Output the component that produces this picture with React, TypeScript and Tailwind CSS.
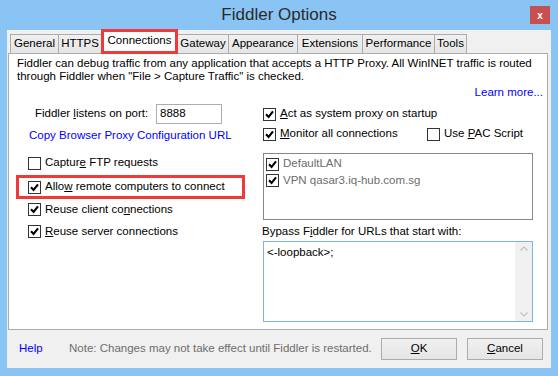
import { ReactNode } from 'react'

const tabs = [
  { name: 'General', w: 'w-[49px]' },
  { name: 'HTTPS', w: 'w-[44px]' },
  { name: 'Connections', w: 'w-[77px]', active: true },
  { name: 'Gateway', w: 'w-[52px]' },
  { name: 'Appearance', w: 'w-[70px]' },
  { name: 'Extensions', w: 'w-[66px]' },
  { name: 'Performance', w: 'w-[73px]' },
  { name: 'Tools', w: 'w-[33px]' },
]

function Check({ checked }: { checked?: boolean }) {
  return (
    <span className="w-[13px] h-[13px] border border-[#333] bg-white flex items-center justify-center shrink-0">
      {checked && (
        <svg width="9" height="9" viewBox="0 0 9 9">
          <path d="M1 4.2 L3.6 7 L8 1.4" stroke="#000" strokeWidth="2.1" fill="none" />
        </svg>
      )}
    </span>
  )
}

function CheckRow({ checked, children, className }: { checked?: boolean; children: ReactNode; className?: string }) {
  return (
    <div className={`flex items-center gap-[4px] ${className ?? ''}`}>
      <Check checked={checked} />
      <span className="whitespace-nowrap">{children}</span>
    </div>
  )
}

export default function App() {
  return (
    <div className="w-[558px] h-[376px] bg-[#8ac4f4] flex flex-col font-['Liberation_Sans',Arial,sans-serif] text-[11.5px] text-black overflow-hidden">
      {/* title bar */}
      <div className="h-[30px] relative flex items-center justify-center">
        <span className="text-[17px] text-[#2a2a2a]">Fiddler Options</span>
        <div className="absolute right-[8px] top-[6px] w-[20px] h-[18px] bg-[#c75050] flex items-center justify-center text-white text-[10px] font-bold">
          x
        </div>
      </div>

      {/* client */}
      <div className="mx-[7px] mb-[8px] flex-1 bg-[#f0f0f0] flex flex-col">
        {/* tabs */}
        <div className="h-[23px] flex items-end pl-[3px]">
          {tabs.map((t, i) =>
            t.active ? (
              <div
                key={t.name}
                className={`${t.w} h-[25px] -ml-px border-[3px] border-[#f03a3a] bg-white flex items-center justify-center relative z-10 -mb-[1px]`}
              >
                <span className="whitespace-nowrap -mt-[2px]">{t.name}</span>
              </div>
            ) : (
              <div
                key={t.name}
                className={`${t.w} h-[19px] ${i > 0 ? '-ml-px' : ''} border border-b-0 border-[#acacac] bg-[linear-gradient(#f0f0f0,#e5e5e5)] flex items-center justify-center`}
              >
                <span className="whitespace-nowrap">{t.name}</span>
              </div>
            ),
          )}
        </div>

        {/* panel */}
        <div className="ml-[1px] w-[540px] h-[277px] border border-[#acacac] bg-white px-[8px] pt-[3px] flex flex-col">
          <p className="leading-[13px] whitespace-nowrap">
            Fiddler can debug traffic from any application that accepts a HTTP Proxy. All WinINET traffic is routed
            <br />
            through Fiddler when "File &gt; Capture Traffic" is checked.
          </p>
          <div className="mt-[3px] h-[13px] leading-[13px] flex justify-end -mr-[4px]">
            <span className="text-[#0000ff]">Learn more...</span>
          </div>

          <div className="mt-[5px] flex">
            {/* left column */}
            <div className="w-[245px] flex flex-col">
              <div className="h-[20px] flex items-center pl-[18px]">
                <span className="w-[121px] whitespace-nowrap">
                  Fiddler <u>l</u>istens on port:
                </span>
                <div className="w-[66px] h-[20px] border border-[#abadb3] bg-white flex items-center pl-[3px]">8888</div>
              </div>
              <div className="h-[24px] flex items-center pl-[12px]">
                <span className="text-[#0000ff] whitespace-nowrap">Copy Browser Proxy Configuration URL</span>
              </div>
              <div className="h-[3px]" />
              <CheckRow className="h-[24px] pl-[11px]">
                Captur<u>e</u> FTP requests
              </CheckRow>
              <div className="relative">
                <CheckRow checked className="h-[24px] pl-[11px]">
                  Allo<u>w</u> remote computers to connect
                </CheckRow>
                <div className="absolute -left-[1px] top-0 w-[229px] h-[24px] border-[3px] border-[#f03a3a]" />
              </div>
              <CheckRow checked className="h-[21px] pl-[11px]">
                Reuse client co<u>n</u>nections
              </CheckRow>
              <CheckRow checked className="h-[23px] pl-[11px]">
                <u>R</u>euse server connections
              </CheckRow>
            </div>

            {/* right column */}
            <div className="w-[271px] flex flex-col pl-[1px]">
              <CheckRow checked className="h-[20px]">
                <u>A</u>ct as system proxy on startup
              </CheckRow>
              <div className="h-[20px] flex items-center">
                <CheckRow checked className="w-[164px]">
                  <u>M</u>onitor all connections
                </CheckRow>
                <CheckRow>
                  Use <u>P</u>AC Script
                </CheckRow>
              </div>
              <div className="mt-[9px] w-[270px] h-[67px] border border-[#828790] bg-white pl-[2px] pt-[2px] flex flex-col text-[#6d6d6d]">
                <CheckRow checked className="h-[16px]">
                  DefaultLAN
                </CheckRow>
                <CheckRow checked className="h-[17px]">
                  VPN qasar3.iq-hub.com.sg
                </CheckRow>
              </div>
              <div className="mt-[4px] h-[16px] flex items-center -ml-[1px] whitespace-nowrap">
                Bypass F<u>i</u>ddler for URLs that start with:
              </div>
              <div className="mt-[1px] w-[270px] h-[81px] border border-[#7eb4ea] bg-white flex">
                <div className="flex-1 pl-[3px] pt-[2px]">&lt;-loopback&gt;;</div>
                <div className="w-[17px] bg-[#f0f0f0] flex flex-col justify-between items-center py-[4px]">
                  <svg width="8" height="5" viewBox="0 0 8 5">
                    <path d="M0.5 4.5 L4 1 L7.5 4.5" stroke="#c2c2c2" strokeWidth="1.2" fill="none" />
                  </svg>
                  <svg width="8" height="5" viewBox="0 0 8 5">
                    <path d="M0.5 0.5 L4 4 L7.5 0.5" stroke="#c2c2c2" strokeWidth="1.2" fill="none" />
                  </svg>
                </div>
              </div>
            </div>
          </div>
        </div>

        {/* bottom bar */}
        <div className="flex-1 flex items-center pl-[12px] pr-[8px]">
          <span className="text-[#0000ff] w-[50px]">Help</span>
          <span className="text-[#6d6d6d] flex-1 whitespace-nowrap">
            Note: Changes may not take effect until Fiddler is restarted.
          </span>
          <div className="flex gap-[10px]">
            <button className="w-[76px] h-[22px] border border-[#acacac] bg-[linear-gradient(#f0f0f0,#e5e5e5)]">
              <u>O</u>K
            </button>
            <button className="w-[76px] h-[22px] border border-[#acacac] bg-[linear-gradient(#f0f0f0,#e5e5e5)]">
              <u>C</u>ancel
            </button>
          </div>
        </div>
      </div>
    </div>
  )
}
